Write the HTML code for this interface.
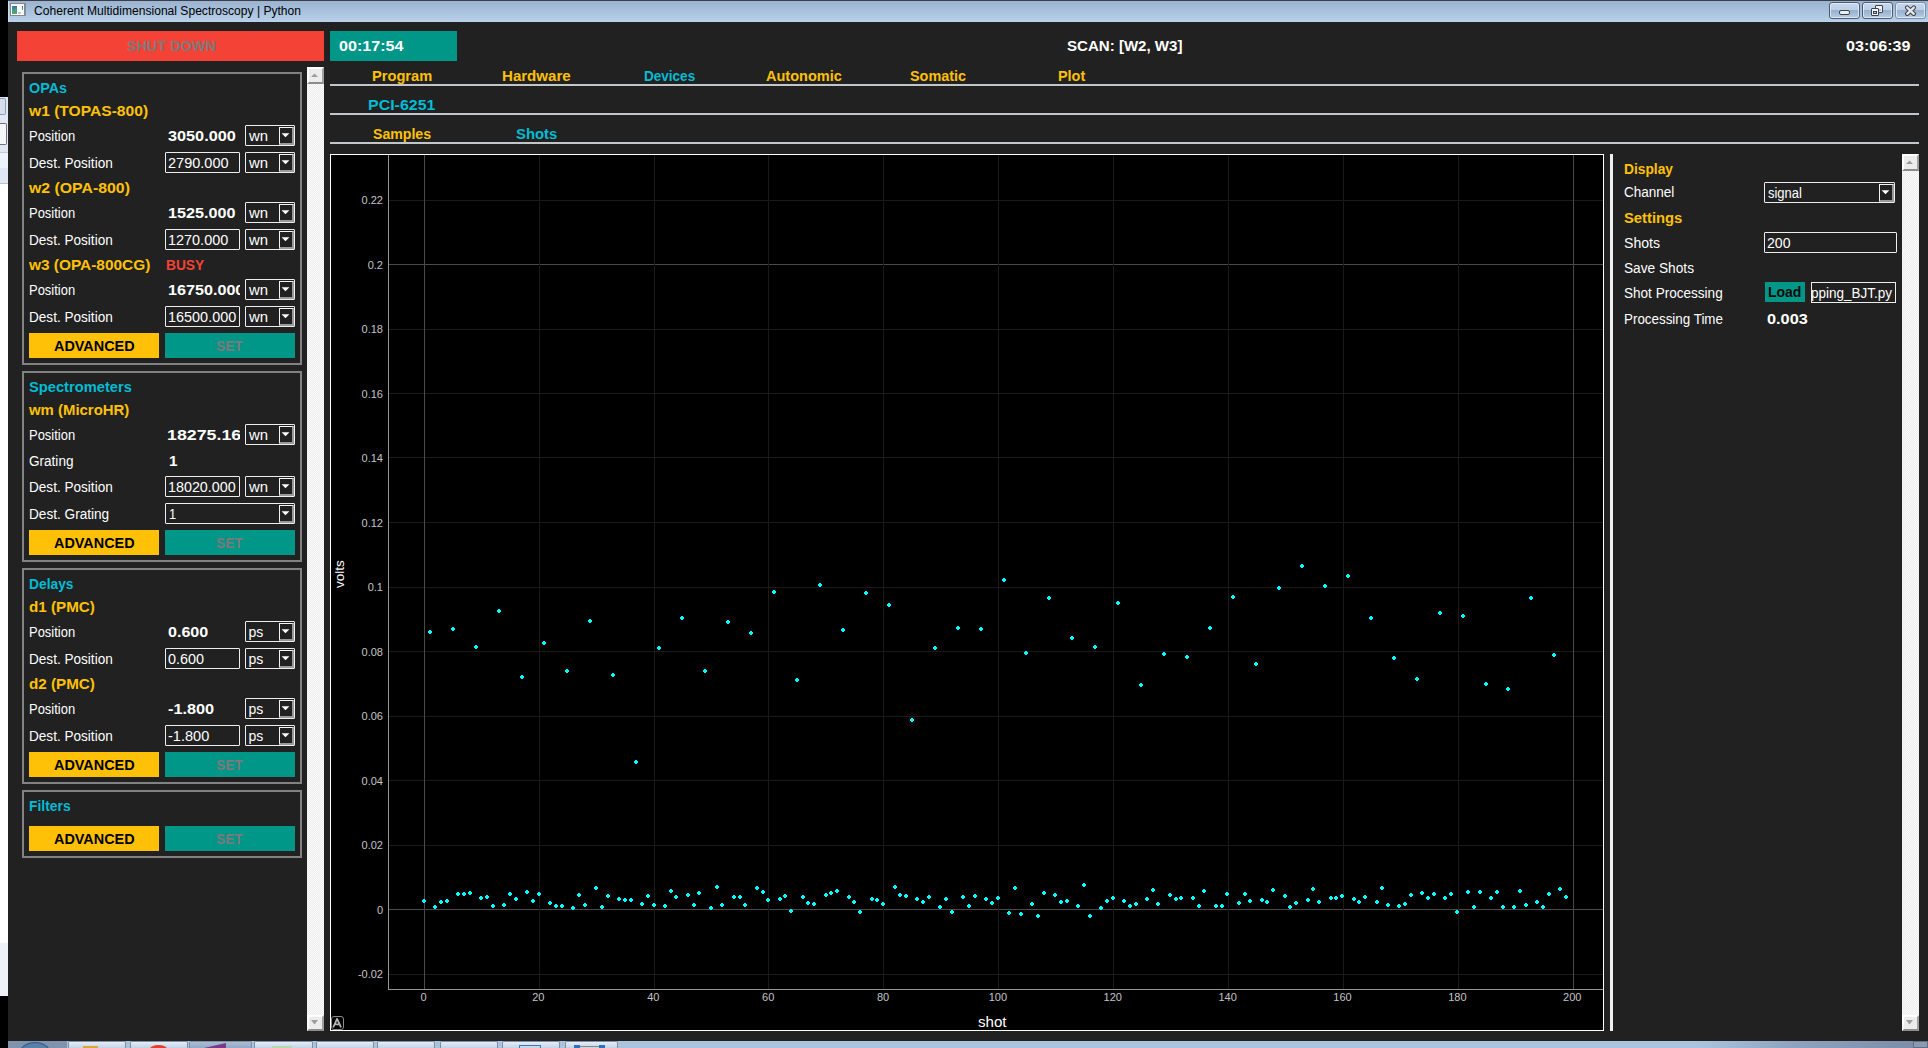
<!DOCTYPE html>
<html><head><meta charset="utf-8"><style>
html,body{margin:0;padding:0;}
body{width:1928px;height:1048px;overflow:hidden;background:#212121;position:relative;font-family:"Liberation Sans", sans-serif;}
.a{position:absolute;}
.t{position:absolute;white-space:pre;transform-origin:0 50%;}
</style></head><body>
<div class="a" style="left:0px;top:0px;width:8px;height:97px;background:#000;"></div>
<div class="a" style="left:0px;top:97px;width:8px;height:56px;background:#dfe8f3;"></div>
<div class="a" style="left:0px;top:98px;width:6px;height:17px;background:#d6dee9;border:1px solid #8a9ab8;box-sizing:border-box;border-left:none;border-radius:0 2px 2px 0;"></div>
<div class="a" style="left:0px;top:123px;width:7px;height:22px;background:#f4f6f9;border:1px solid #6e737a;box-sizing:border-box;border-left:none;border-radius:0 2px 2px 0;"></div>
<div class="a" style="left:0px;top:152px;width:8px;height:1px;background:#c3ccd6;"></div>
<div class="a" style="left:0px;top:153px;width:8px;height:15px;background:#eef4fb;"></div>
<div class="a" style="left:0px;top:168px;width:8px;height:15px;background:#dfe8f4;"></div>
<div class="a" style="left:0px;top:183px;width:8px;height:1px;background:#b4c2d2;"></div>
<div class="a" style="left:0px;top:184px;width:8px;height:759px;background:#ffffff;"></div>
<div class="a" style="left:0px;top:943px;width:8px;height:53px;background:#eef2f8;"></div>
<div class="a" style="left:0px;top:996px;width:8px;height:45px;background:#000;"></div>
<div class="a" style="left:8px;top:0px;width:1920px;height:1px;background:#3a3f47;"></div>
<div class="a" style="left:8px;top:1px;width:1920px;height:21px;background:linear-gradient(#9bb3d0,#a9c2dd 50%,#b9d1ea);"></div>
<div class="a" style="left:8px;top:1px;width:1px;height:21px;background:#c9dcf0;"></div>
<div class="a" style="left:10px;top:3px;width:15px;height:13px;background:#fafafa;border:1px solid #84888c;box-sizing:border-box;box-shadow:1px 0 0 rgba(90,95,100,0.5);"></div>
<div class="a" style="left:12px;top:6px;width:5px;height:8px;background:linear-gradient(#3d6eae,#4a9a8a 50%,#52ac5e);"></div>
<div class="a" style="left:22px;top:6px;width:1px;height:4px;background:linear-gradient(#2e64b0,#4aac50);"></div>
<div class="a" style="left:18px;top:12px;width:3px;height:2px;background:#c8c8c8;"></div>
<div class="a" style="left:1829px;top:2px;width:31px;height:17px;border:1px solid #4e5a6e;border-radius:3px;box-sizing:border-box;background:linear-gradient(#c6d8ec 0,#bcd0e6 45%,#97b1cf 50%,#a6bed8 75%,#b8cde4 100%);box-shadow:inset 0 0 0 1px rgba(235,243,252,0.75)"></div>
<div class="a" style="left:1862px;top:2px;width:31px;height:17px;border:1px solid #4e5a6e;border-radius:3px;box-sizing:border-box;background:linear-gradient(#c6d8ec 0,#bcd0e6 45%,#97b1cf 50%,#a6bed8 75%,#b8cde4 100%);box-shadow:inset 0 0 0 1px rgba(235,243,252,0.75)"></div>
<div class="a" style="left:1895px;top:2px;width:31px;height:17px;border:1px solid #7e8ea6;border-radius:3px;box-sizing:border-box;background:linear-gradient(#c6d8ec 0,#bcd0e6 45%,#97b1cf 50%,#a6bed8 75%,#b8cde4 100%);box-shadow:inset 0 0 0 1px rgba(235,243,252,0.75)"></div>
<div class="a" style="left:1839px;top:10px;width:11px;height:5px;background:#eeeeee;border:1px solid #3c4250;border-radius:2px;box-sizing:border-box"></div>
<div class="a" style="left:1875px;top:5px;width:8px;height:8px;background:#f4f4f4;border:1px solid #3c4250;border-radius:1px;box-sizing:border-box"></div>
<div class="a" style="left:1879px;top:9px;width:2px;height:2px;background:#a8c0dc"></div>
<div class="a" style="left:1871px;top:8px;width:8px;height:8px;background:#f4f4f4;border:1px solid #3c4250;border-radius:1px;box-sizing:border-box"></div>
<div class="a" style="left:1873px;top:11px;width:4px;height:3px;background:#a8c0dc;border:1px solid #3c4250;box-sizing:border-box"></div>
<svg class="a" style="left:1904px;top:5px" width="13" height="11"><path d="M3.2 2.6 L9.8 8.8 M9.8 2.6 L3.2 8.8" stroke="#3c4250" stroke-width="4.4" stroke-linecap="round"/><path d="M3.2 2.6 L9.8 8.8 M9.8 2.6 L3.2 8.8" stroke="#e6e6e6" stroke-width="2.4" stroke-linecap="round"/></svg>
<div class="a" style="left:17px;top:31px;width:307px;height:30px;background:#F44336;"></div>
<div class="a" style="left:330px;top:31px;width:127px;height:30px;background:#009688;"></div>
<div class="a" style="left:330px;top:84px;width:1589px;height:2px;background:#c2c6c9;"></div>
<div class="a" style="left:330px;top:113px;width:1589px;height:2px;background:#c2c6c9;"></div>
<div class="a" style="left:330px;top:142px;width:1589px;height:2px;background:#c2c6c9;"></div>
<div class="a" style="left:22px;top:72px;width:280px;height:293px;border:2px solid #828282;box-sizing:border-box;"></div>
<div class="a" style="left:245px;top:125px;width:50px;height:21px;background:#212121;border:1px solid #eeeeee;box-sizing:border-box;border-radius:1px;"></div>
<div class="a" style="left:279px;top:127px;width:15px;height:18px;background:#212121;border-left:1px solid #f4f4f4;border-top:1px solid #f4f4f4;border-right:2px solid #9a9a9a;border-bottom:2px solid #9a9a9a;box-sizing:border-box;"></div>
<svg class="a" style="left:279px;top:125px" width="15" height="21"><path d="M2.6 8.2 L10.4 8.2 L6.5 12.2 Z" fill="#ffffff"/></svg>
<div class="a" style="left:165px;top:152px;width:75px;height:21px;background:#212121;border:1px solid #eeeeee;box-sizing:border-box;border-radius:1px;"></div>
<div class="a" style="left:245px;top:152px;width:50px;height:21px;background:#212121;border:1px solid #eeeeee;box-sizing:border-box;border-radius:1px;"></div>
<div class="a" style="left:279px;top:154px;width:15px;height:18px;background:#212121;border-left:1px solid #f4f4f4;border-top:1px solid #f4f4f4;border-right:2px solid #9a9a9a;border-bottom:2px solid #9a9a9a;box-sizing:border-box;"></div>
<svg class="a" style="left:279px;top:152px" width="15" height="21"><path d="M2.6 8.2 L10.4 8.2 L6.5 12.2 Z" fill="#ffffff"/></svg>
<div class="a" style="left:245px;top:202px;width:50px;height:21px;background:#212121;border:1px solid #eeeeee;box-sizing:border-box;border-radius:1px;"></div>
<div class="a" style="left:279px;top:204px;width:15px;height:18px;background:#212121;border-left:1px solid #f4f4f4;border-top:1px solid #f4f4f4;border-right:2px solid #9a9a9a;border-bottom:2px solid #9a9a9a;box-sizing:border-box;"></div>
<svg class="a" style="left:279px;top:202px" width="15" height="21"><path d="M2.6 8.2 L10.4 8.2 L6.5 12.2 Z" fill="#ffffff"/></svg>
<div class="a" style="left:165px;top:229px;width:75px;height:21px;background:#212121;border:1px solid #eeeeee;box-sizing:border-box;border-radius:1px;"></div>
<div class="a" style="left:245px;top:229px;width:50px;height:21px;background:#212121;border:1px solid #eeeeee;box-sizing:border-box;border-radius:1px;"></div>
<div class="a" style="left:279px;top:231px;width:15px;height:18px;background:#212121;border-left:1px solid #f4f4f4;border-top:1px solid #f4f4f4;border-right:2px solid #9a9a9a;border-bottom:2px solid #9a9a9a;box-sizing:border-box;"></div>
<svg class="a" style="left:279px;top:229px" width="15" height="21"><path d="M2.6 8.2 L10.4 8.2 L6.5 12.2 Z" fill="#ffffff"/></svg>
<div class="a" style="left:245px;top:279px;width:50px;height:21px;background:#212121;border:1px solid #eeeeee;box-sizing:border-box;border-radius:1px;"></div>
<div class="a" style="left:279px;top:281px;width:15px;height:18px;background:#212121;border-left:1px solid #f4f4f4;border-top:1px solid #f4f4f4;border-right:2px solid #9a9a9a;border-bottom:2px solid #9a9a9a;box-sizing:border-box;"></div>
<svg class="a" style="left:279px;top:279px" width="15" height="21"><path d="M2.6 8.2 L10.4 8.2 L6.5 12.2 Z" fill="#ffffff"/></svg>
<div class="a" style="left:165px;top:306px;width:75px;height:21px;background:#212121;border:1px solid #eeeeee;box-sizing:border-box;border-radius:1px;"></div>
<div class="a" style="left:245px;top:306px;width:50px;height:21px;background:#212121;border:1px solid #eeeeee;box-sizing:border-box;border-radius:1px;"></div>
<div class="a" style="left:279px;top:308px;width:15px;height:18px;background:#212121;border-left:1px solid #f4f4f4;border-top:1px solid #f4f4f4;border-right:2px solid #9a9a9a;border-bottom:2px solid #9a9a9a;box-sizing:border-box;"></div>
<svg class="a" style="left:279px;top:306px" width="15" height="21"><path d="M2.6 8.2 L10.4 8.2 L6.5 12.2 Z" fill="#ffffff"/></svg>
<div class="a" style="left:29px;top:333px;width:130px;height:25px;background:#FFC107;"></div>
<div class="a" style="left:165px;top:333px;width:130px;height:25px;background:#009688;"></div>
<div class="a" style="left:22px;top:371px;width:280px;height:191px;border:2px solid #828282;box-sizing:border-box;"></div>
<div class="a" style="left:245px;top:424px;width:50px;height:21px;background:#212121;border:1px solid #eeeeee;box-sizing:border-box;border-radius:1px;"></div>
<div class="a" style="left:279px;top:426px;width:15px;height:18px;background:#212121;border-left:1px solid #f4f4f4;border-top:1px solid #f4f4f4;border-right:2px solid #9a9a9a;border-bottom:2px solid #9a9a9a;box-sizing:border-box;"></div>
<svg class="a" style="left:279px;top:424px" width="15" height="21"><path d="M2.6 8.2 L10.4 8.2 L6.5 12.2 Z" fill="#ffffff"/></svg>
<div class="a" style="left:165px;top:476px;width:75px;height:21px;background:#212121;border:1px solid #eeeeee;box-sizing:border-box;border-radius:1px;"></div>
<div class="a" style="left:245px;top:476px;width:50px;height:21px;background:#212121;border:1px solid #eeeeee;box-sizing:border-box;border-radius:1px;"></div>
<div class="a" style="left:279px;top:478px;width:15px;height:18px;background:#212121;border-left:1px solid #f4f4f4;border-top:1px solid #f4f4f4;border-right:2px solid #9a9a9a;border-bottom:2px solid #9a9a9a;box-sizing:border-box;"></div>
<svg class="a" style="left:279px;top:476px" width="15" height="21"><path d="M2.6 8.2 L10.4 8.2 L6.5 12.2 Z" fill="#ffffff"/></svg>
<div class="a" style="left:165px;top:503px;width:130px;height:21px;background:#212121;border:1px solid #eeeeee;box-sizing:border-box;border-radius:1px;"></div>
<div class="a" style="left:279px;top:505px;width:15px;height:18px;background:#212121;border-left:1px solid #f4f4f4;border-top:1px solid #f4f4f4;border-right:2px solid #9a9a9a;border-bottom:2px solid #9a9a9a;box-sizing:border-box;"></div>
<svg class="a" style="left:279px;top:503px" width="15" height="21"><path d="M2.6 8.2 L10.4 8.2 L6.5 12.2 Z" fill="#ffffff"/></svg>
<div class="a" style="left:29px;top:530px;width:130px;height:25px;background:#FFC107;"></div>
<div class="a" style="left:165px;top:530px;width:130px;height:25px;background:#009688;"></div>
<div class="a" style="left:22px;top:568px;width:280px;height:216px;border:2px solid #828282;box-sizing:border-box;"></div>
<div class="a" style="left:245px;top:621px;width:50px;height:21px;background:#212121;border:1px solid #eeeeee;box-sizing:border-box;border-radius:1px;"></div>
<div class="a" style="left:279px;top:623px;width:15px;height:18px;background:#212121;border-left:1px solid #f4f4f4;border-top:1px solid #f4f4f4;border-right:2px solid #9a9a9a;border-bottom:2px solid #9a9a9a;box-sizing:border-box;"></div>
<svg class="a" style="left:279px;top:621px" width="15" height="21"><path d="M2.6 8.2 L10.4 8.2 L6.5 12.2 Z" fill="#ffffff"/></svg>
<div class="a" style="left:165px;top:648px;width:75px;height:21px;background:#212121;border:1px solid #eeeeee;box-sizing:border-box;border-radius:1px;"></div>
<div class="a" style="left:245px;top:648px;width:50px;height:21px;background:#212121;border:1px solid #eeeeee;box-sizing:border-box;border-radius:1px;"></div>
<div class="a" style="left:279px;top:650px;width:15px;height:18px;background:#212121;border-left:1px solid #f4f4f4;border-top:1px solid #f4f4f4;border-right:2px solid #9a9a9a;border-bottom:2px solid #9a9a9a;box-sizing:border-box;"></div>
<svg class="a" style="left:279px;top:648px" width="15" height="21"><path d="M2.6 8.2 L10.4 8.2 L6.5 12.2 Z" fill="#ffffff"/></svg>
<div class="a" style="left:245px;top:698px;width:50px;height:21px;background:#212121;border:1px solid #eeeeee;box-sizing:border-box;border-radius:1px;"></div>
<div class="a" style="left:279px;top:700px;width:15px;height:18px;background:#212121;border-left:1px solid #f4f4f4;border-top:1px solid #f4f4f4;border-right:2px solid #9a9a9a;border-bottom:2px solid #9a9a9a;box-sizing:border-box;"></div>
<svg class="a" style="left:279px;top:698px" width="15" height="21"><path d="M2.6 8.2 L10.4 8.2 L6.5 12.2 Z" fill="#ffffff"/></svg>
<div class="a" style="left:165px;top:725px;width:75px;height:21px;background:#212121;border:1px solid #eeeeee;box-sizing:border-box;border-radius:1px;"></div>
<div class="a" style="left:245px;top:725px;width:50px;height:21px;background:#212121;border:1px solid #eeeeee;box-sizing:border-box;border-radius:1px;"></div>
<div class="a" style="left:279px;top:727px;width:15px;height:18px;background:#212121;border-left:1px solid #f4f4f4;border-top:1px solid #f4f4f4;border-right:2px solid #9a9a9a;border-bottom:2px solid #9a9a9a;box-sizing:border-box;"></div>
<svg class="a" style="left:279px;top:725px" width="15" height="21"><path d="M2.6 8.2 L10.4 8.2 L6.5 12.2 Z" fill="#ffffff"/></svg>
<div class="a" style="left:29px;top:752px;width:130px;height:25px;background:#FFC107;"></div>
<div class="a" style="left:165px;top:752px;width:130px;height:25px;background:#009688;"></div>
<div class="a" style="left:22px;top:790px;width:280px;height:68px;border:2px solid #828282;box-sizing:border-box;"></div>
<div class="a" style="left:29px;top:826px;width:130px;height:25px;background:#FFC107;"></div>
<div class="a" style="left:165px;top:826px;width:130px;height:25px;background:#009688;"></div>
<div class="a" style="left:307px;top:67px;width:17px;height:964px;background-color:#fbfbfb;background-image:linear-gradient(45deg,#ececec 25%,transparent 25%,transparent 75%,#ececec 75%),linear-gradient(45deg,#ececec 25%,transparent 25%,transparent 75%,#ececec 75%);background-size:2px 2px;background-position:0 0,1px 1px"></div>
<div class="a" style="left:307px;top:67px;width:17px;height:17px;background:#ececec;border-top:2px solid #fff;border-left:2px solid #fff;border-right:2px solid #a0a0a0;border-bottom:2px solid #8c8c8c;box-sizing:border-box"></div>
<svg class="a" style="left:307px;top:67px" width="17" height="17"><path d="M4 10 L11 10 L7.5 6.5 Z" fill="#9c9c9c"/></svg>
<div class="a" style="left:307px;top:1015px;width:17px;height:16px;background:#ececec;border-top:2px solid #fff;border-left:2px solid #fff;border-right:2px solid #a0a0a0;border-bottom:2px solid #8c8c8c;box-sizing:border-box"></div>
<svg class="a" style="left:307px;top:1015px" width="17" height="16"><path d="M4 5 L11 5 L7.5 9.5 Z" fill="#9c9c9c"/></svg>
<div class="a" style="left:330px;top:154px;width:1274px;height:877px;background:#000;border:1px solid #ffffff;box-sizing:border-box;"></div>
<svg class="a" style="left:0;top:0" width="1928" height="1048" shape-rendering="crispEdges"><line x1="388" y1="974.5" x2="1603" y2="974.5" stroke="#1a1a1a" stroke-width="1"/><line x1="388" y1="909.5" x2="1603" y2="909.5" stroke="#4a4a4a" stroke-width="1"/><line x1="388" y1="845.5" x2="1603" y2="845.5" stroke="#1a1a1a" stroke-width="1"/><line x1="388" y1="780.5" x2="1603" y2="780.5" stroke="#1a1a1a" stroke-width="1"/><line x1="388" y1="716.5" x2="1603" y2="716.5" stroke="#1a1a1a" stroke-width="1"/><line x1="388" y1="651.5" x2="1603" y2="651.5" stroke="#1a1a1a" stroke-width="1"/><line x1="388" y1="587.5" x2="1603" y2="587.5" stroke="#1a1a1a" stroke-width="1"/><line x1="388" y1="522.5" x2="1603" y2="522.5" stroke="#1a1a1a" stroke-width="1"/><line x1="388" y1="457.5" x2="1603" y2="457.5" stroke="#1a1a1a" stroke-width="1"/><line x1="388" y1="393.5" x2="1603" y2="393.5" stroke="#1a1a1a" stroke-width="1"/><line x1="388" y1="329.5" x2="1603" y2="329.5" stroke="#1a1a1a" stroke-width="1"/><line x1="388" y1="264.5" x2="1603" y2="264.5" stroke="#4a4a4a" stroke-width="1"/><line x1="388" y1="200.5" x2="1603" y2="200.5" stroke="#1a1a1a" stroke-width="1"/><line x1="424.5" y1="155" x2="424.5" y2="989" stroke="#4a4a4a" stroke-width="1"/><line x1="539.5" y1="155" x2="539.5" y2="989" stroke="#1a1a1a" stroke-width="1"/><line x1="654.5" y1="155" x2="654.5" y2="989" stroke="#1a1a1a" stroke-width="1"/><line x1="768.5" y1="155" x2="768.5" y2="989" stroke="#1a1a1a" stroke-width="1"/><line x1="883.5" y1="155" x2="883.5" y2="989" stroke="#1a1a1a" stroke-width="1"/><line x1="998.5" y1="155" x2="998.5" y2="989" stroke="#1a1a1a" stroke-width="1"/><line x1="1113.5" y1="155" x2="1113.5" y2="989" stroke="#1a1a1a" stroke-width="1"/><line x1="1228.5" y1="155" x2="1228.5" y2="989" stroke="#1a1a1a" stroke-width="1"/><line x1="1343.5" y1="155" x2="1343.5" y2="989" stroke="#1a1a1a" stroke-width="1"/><line x1="1458.5" y1="155" x2="1458.5" y2="989" stroke="#1a1a1a" stroke-width="1"/><line x1="1573.5" y1="155" x2="1573.5" y2="989" stroke="#4a4a4a" stroke-width="1"/><line x1="388.5" y1="155" x2="388.5" y2="990" stroke="#969696" stroke-width="1"/><line x1="388" y1="989.5" x2="1603" y2="989.5" stroke="#969696" stroke-width="1"/></svg>
<div class="a" style="left:320.3px;top:566.8px;width:40px;height:14px;"><div style="position:absolute;left:0;top:0;width:40px;text-align:center;transform-origin:20px 7px;transform:rotate(-90deg);font-size:13.5px;line-height:14px;color:#fff;white-space:nowrap">volts</div></div>
<div class="a" style="left:331px;top:1016px;width:13px;height:14px;border:1px solid #8a8a8a;border-radius:3px;box-sizing:border-box"></div>
<svg class="a" style="left:331px;top:1016px" width="13" height="14"><path d="M2.2 11.4 L6.1 2.8 L10 11.4 M3.9 8.4 L8.3 8.4" stroke="#b4b4b4" stroke-width="1.8" fill="none" stroke-linejoin="round"/></svg>
<svg class="a" style="left:0;top:0" width="1928" height="1048" shape-rendering="crispEdges"><g fill="#00ffff"><path d="M423 899h2v1h1v2h-1v1h-2v-1h-1v-2h1z"/><path d="M434 905h2v1h1v2h-1v1h-2v-1h-1v-2h1z"/><path d="M440 900h2v1h1v2h-1v1h-2v-1h-1v-2h1z"/><path d="M446 899h2v1h1v2h-1v1h-2v-1h-1v-2h1z"/><path d="M457 892h2v1h1v2h-1v1h-2v-1h-1v-2h1z"/><path d="M463 892h2v1h1v2h-1v1h-2v-1h-1v-2h1z"/><path d="M469 891h2v1h1v2h-1v1h-2v-1h-1v-2h1z"/><path d="M480 896h2v1h1v2h-1v1h-2v-1h-1v-2h1z"/><path d="M486 895h2v1h1v2h-1v1h-2v-1h-1v-2h1z"/><path d="M492 904h2v1h1v2h-1v1h-2v-1h-1v-2h1z"/><path d="M503 903h2v1h1v2h-1v1h-2v-1h-1v-2h1z"/><path d="M509 892h2v1h1v2h-1v1h-2v-1h-1v-2h1z"/><path d="M515 897h2v1h1v2h-1v1h-2v-1h-1v-2h1z"/><path d="M526 890h2v1h1v2h-1v1h-2v-1h-1v-2h1z"/><path d="M532 899h2v1h1v2h-1v1h-2v-1h-1v-2h1z"/><path d="M538 892h2v1h1v2h-1v1h-2v-1h-1v-2h1z"/><path d="M549 901h2v1h1v2h-1v1h-2v-1h-1v-2h1z"/><path d="M555 904h2v1h1v2h-1v1h-2v-1h-1v-2h1z"/><path d="M561 904h2v1h1v2h-1v1h-2v-1h-1v-2h1z"/><path d="M572 906h2v1h1v2h-1v1h-2v-1h-1v-2h1z"/><path d="M578 893h2v1h1v2h-1v1h-2v-1h-1v-2h1z"/><path d="M584 903h2v1h1v2h-1v1h-2v-1h-1v-2h1z"/><path d="M595 886h2v1h1v2h-1v1h-2v-1h-1v-2h1z"/><path d="M601 905h2v1h1v2h-1v1h-2v-1h-1v-2h1z"/><path d="M607 894h2v1h1v2h-1v1h-2v-1h-1v-2h1z"/><path d="M618 897h2v1h1v2h-1v1h-2v-1h-1v-2h1z"/><path d="M624 898h2v1h1v2h-1v1h-2v-1h-1v-2h1z"/><path d="M630 898h2v1h1v2h-1v1h-2v-1h-1v-2h1z"/><path d="M641 902h2v1h1v2h-1v1h-2v-1h-1v-2h1z"/><path d="M647 894h2v1h1v2h-1v1h-2v-1h-1v-2h1z"/><path d="M653 903h2v1h1v2h-1v1h-2v-1h-1v-2h1z"/><path d="M664 904h2v1h1v2h-1v1h-2v-1h-1v-2h1z"/><path d="M670 889h2v1h1v2h-1v1h-2v-1h-1v-2h1z"/><path d="M675 895h2v1h1v2h-1v1h-2v-1h-1v-2h1z"/><path d="M687 893h2v1h1v2h-1v1h-2v-1h-1v-2h1z"/><path d="M693 903h2v1h1v2h-1v1h-2v-1h-1v-2h1z"/><path d="M698 891h2v1h1v2h-1v1h-2v-1h-1v-2h1z"/><path d="M710 906h2v1h1v2h-1v1h-2v-1h-1v-2h1z"/><path d="M716 885h2v1h1v2h-1v1h-2v-1h-1v-2h1z"/><path d="M721 903h2v1h1v2h-1v1h-2v-1h-1v-2h1z"/><path d="M733 895h2v1h1v2h-1v1h-2v-1h-1v-2h1z"/><path d="M739 895h2v1h1v2h-1v1h-2v-1h-1v-2h1z"/><path d="M744 903h2v1h1v2h-1v1h-2v-1h-1v-2h1z"/><path d="M756 886h2v1h1v2h-1v1h-2v-1h-1v-2h1z"/><path d="M762 890h2v1h1v2h-1v1h-2v-1h-1v-2h1z"/><path d="M767 898h2v1h1v2h-1v1h-2v-1h-1v-2h1z"/><path d="M779 897h2v1h1v2h-1v1h-2v-1h-1v-2h1z"/><path d="M784 894h2v1h1v2h-1v1h-2v-1h-1v-2h1z"/><path d="M790 909h2v1h1v2h-1v1h-2v-1h-1v-2h1z"/><path d="M802 895h2v1h1v2h-1v1h-2v-1h-1v-2h1z"/><path d="M807 901h2v1h1v2h-1v1h-2v-1h-1v-2h1z"/><path d="M813 902h2v1h1v2h-1v1h-2v-1h-1v-2h1z"/><path d="M825 893h2v1h1v2h-1v1h-2v-1h-1v-2h1z"/><path d="M830 891h2v1h1v2h-1v1h-2v-1h-1v-2h1z"/><path d="M836 889h2v1h1v2h-1v1h-2v-1h-1v-2h1z"/><path d="M848 895h2v1h1v2h-1v1h-2v-1h-1v-2h1z"/><path d="M853 900h2v1h1v2h-1v1h-2v-1h-1v-2h1z"/><path d="M859 910h2v1h1v2h-1v1h-2v-1h-1v-2h1z"/><path d="M871 897h2v1h1v2h-1v1h-2v-1h-1v-2h1z"/><path d="M876 898h2v1h1v2h-1v1h-2v-1h-1v-2h1z"/><path d="M882 902h2v1h1v2h-1v1h-2v-1h-1v-2h1z"/><path d="M894 885h2v1h1v2h-1v1h-2v-1h-1v-2h1z"/><path d="M899 893h2v1h1v2h-1v1h-2v-1h-1v-2h1z"/><path d="M905 894h2v1h1v2h-1v1h-2v-1h-1v-2h1z"/><path d="M916 897h2v1h1v2h-1v1h-2v-1h-1v-2h1z"/><path d="M922 900h2v1h1v2h-1v1h-2v-1h-1v-2h1z"/><path d="M928 895h2v1h1v2h-1v1h-2v-1h-1v-2h1z"/><path d="M939 905h2v1h1v2h-1v1h-2v-1h-1v-2h1z"/><path d="M945 897h2v1h1v2h-1v1h-2v-1h-1v-2h1z"/><path d="M951 910h2v1h1v2h-1v1h-2v-1h-1v-2h1z"/><path d="M962 895h2v1h1v2h-1v1h-2v-1h-1v-2h1z"/><path d="M968 904h2v1h1v2h-1v1h-2v-1h-1v-2h1z"/><path d="M974 894h2v1h1v2h-1v1h-2v-1h-1v-2h1z"/><path d="M985 897h2v1h1v2h-1v1h-2v-1h-1v-2h1z"/><path d="M991 901h2v1h1v2h-1v1h-2v-1h-1v-2h1z"/><path d="M997 896h2v1h1v2h-1v1h-2v-1h-1v-2h1z"/><path d="M1008 911h2v1h1v2h-1v1h-2v-1h-1v-2h1z"/><path d="M1014 886h2v1h1v2h-1v1h-2v-1h-1v-2h1z"/><path d="M1020 912h2v1h1v2h-1v1h-2v-1h-1v-2h1z"/><path d="M1031 902h2v1h1v2h-1v1h-2v-1h-1v-2h1z"/><path d="M1037 914h2v1h1v2h-1v1h-2v-1h-1v-2h1z"/><path d="M1043 891h2v1h1v2h-1v1h-2v-1h-1v-2h1z"/><path d="M1054 893h2v1h1v2h-1v1h-2v-1h-1v-2h1z"/><path d="M1060 900h2v1h1v2h-1v1h-2v-1h-1v-2h1z"/><path d="M1066 899h2v1h1v2h-1v1h-2v-1h-1v-2h1z"/><path d="M1077 904h2v1h1v2h-1v1h-2v-1h-1v-2h1z"/><path d="M1083 883h2v1h1v2h-1v1h-2v-1h-1v-2h1z"/><path d="M1089 914h2v1h1v2h-1v1h-2v-1h-1v-2h1z"/><path d="M1100 906h2v1h1v2h-1v1h-2v-1h-1v-2h1z"/><path d="M1106 899h2v1h1v2h-1v1h-2v-1h-1v-2h1z"/><path d="M1112 896h2v1h1v2h-1v1h-2v-1h-1v-2h1z"/><path d="M1123 899h2v1h1v2h-1v1h-2v-1h-1v-2h1z"/><path d="M1129 904h2v1h1v2h-1v1h-2v-1h-1v-2h1z"/><path d="M1135 902h2v1h1v2h-1v1h-2v-1h-1v-2h1z"/><path d="M1146 897h2v1h1v2h-1v1h-2v-1h-1v-2h1z"/><path d="M1152 888h2v1h1v2h-1v1h-2v-1h-1v-2h1z"/><path d="M1157 902h2v1h1v2h-1v1h-2v-1h-1v-2h1z"/><path d="M1169 893h2v1h1v2h-1v1h-2v-1h-1v-2h1z"/><path d="M1175 897h2v1h1v2h-1v1h-2v-1h-1v-2h1z"/><path d="M1180 896h2v1h1v2h-1v1h-2v-1h-1v-2h1z"/><path d="M1192 896h2v1h1v2h-1v1h-2v-1h-1v-2h1z"/><path d="M1198 904h2v1h1v2h-1v1h-2v-1h-1v-2h1z"/><path d="M1203 889h2v1h1v2h-1v1h-2v-1h-1v-2h1z"/><path d="M1215 904h2v1h1v2h-1v1h-2v-1h-1v-2h1z"/><path d="M1221 904h2v1h1v2h-1v1h-2v-1h-1v-2h1z"/><path d="M1226 892h2v1h1v2h-1v1h-2v-1h-1v-2h1z"/><path d="M1238 901h2v1h1v2h-1v1h-2v-1h-1v-2h1z"/><path d="M1244 892h2v1h1v2h-1v1h-2v-1h-1v-2h1z"/><path d="M1249 899h2v1h1v2h-1v1h-2v-1h-1v-2h1z"/><path d="M1261 898h2v1h1v2h-1v1h-2v-1h-1v-2h1z"/><path d="M1266 900h2v1h1v2h-1v1h-2v-1h-1v-2h1z"/><path d="M1272 888h2v1h1v2h-1v1h-2v-1h-1v-2h1z"/><path d="M1284 894h2v1h1v2h-1v1h-2v-1h-1v-2h1z"/><path d="M1289 905h2v1h1v2h-1v1h-2v-1h-1v-2h1z"/><path d="M1295 901h2v1h1v2h-1v1h-2v-1h-1v-2h1z"/><path d="M1307 898h2v1h1v2h-1v1h-2v-1h-1v-2h1z"/><path d="M1312 887h2v1h1v2h-1v1h-2v-1h-1v-2h1z"/><path d="M1318 900h2v1h1v2h-1v1h-2v-1h-1v-2h1z"/><path d="M1330 896h2v1h1v2h-1v1h-2v-1h-1v-2h1z"/><path d="M1335 896h2v1h1v2h-1v1h-2v-1h-1v-2h1z"/><path d="M1341 894h2v1h1v2h-1v1h-2v-1h-1v-2h1z"/><path d="M1353 897h2v1h1v2h-1v1h-2v-1h-1v-2h1z"/><path d="M1358 900h2v1h1v2h-1v1h-2v-1h-1v-2h1z"/><path d="M1364 895h2v1h1v2h-1v1h-2v-1h-1v-2h1z"/><path d="M1376 900h2v1h1v2h-1v1h-2v-1h-1v-2h1z"/><path d="M1381 886h2v1h1v2h-1v1h-2v-1h-1v-2h1z"/><path d="M1387 903h2v1h1v2h-1v1h-2v-1h-1v-2h1z"/><path d="M1398 904h2v1h1v2h-1v1h-2v-1h-1v-2h1z"/><path d="M1404 902h2v1h1v2h-1v1h-2v-1h-1v-2h1z"/><path d="M1410 893h2v1h1v2h-1v1h-2v-1h-1v-2h1z"/><path d="M1421 891h2v1h1v2h-1v1h-2v-1h-1v-2h1z"/><path d="M1427 896h2v1h1v2h-1v1h-2v-1h-1v-2h1z"/><path d="M1433 892h2v1h1v2h-1v1h-2v-1h-1v-2h1z"/><path d="M1444 896h2v1h1v2h-1v1h-2v-1h-1v-2h1z"/><path d="M1450 892h2v1h1v2h-1v1h-2v-1h-1v-2h1z"/><path d="M1456 910h2v1h1v2h-1v1h-2v-1h-1v-2h1z"/><path d="M1467 890h2v1h1v2h-1v1h-2v-1h-1v-2h1z"/><path d="M1473 905h2v1h1v2h-1v1h-2v-1h-1v-2h1z"/><path d="M1479 890h2v1h1v2h-1v1h-2v-1h-1v-2h1z"/><path d="M1490 896h2v1h1v2h-1v1h-2v-1h-1v-2h1z"/><path d="M1496 890h2v1h1v2h-1v1h-2v-1h-1v-2h1z"/><path d="M1502 905h2v1h1v2h-1v1h-2v-1h-1v-2h1z"/><path d="M1513 905h2v1h1v2h-1v1h-2v-1h-1v-2h1z"/><path d="M1519 889h2v1h1v2h-1v1h-2v-1h-1v-2h1z"/><path d="M1525 903h2v1h1v2h-1v1h-2v-1h-1v-2h1z"/><path d="M1536 900h2v1h1v2h-1v1h-2v-1h-1v-2h1z"/><path d="M1542 905h2v1h1v2h-1v1h-2v-1h-1v-2h1z"/><path d="M1548 892h2v1h1v2h-1v1h-2v-1h-1v-2h1z"/><path d="M1559 887h2v1h1v2h-1v1h-2v-1h-1v-2h1z"/><path d="M1565 895h2v1h1v2h-1v1h-2v-1h-1v-2h1z"/><path d="M429 630h2v1h1v2h-1v1h-2v-1h-1v-2h1z"/><path d="M452 627h2v1h1v2h-1v1h-2v-1h-1v-2h1z"/><path d="M475 645h2v1h1v2h-1v1h-2v-1h-1v-2h1z"/><path d="M498 609h2v1h1v2h-1v1h-2v-1h-1v-2h1z"/><path d="M521 675h2v1h1v2h-1v1h-2v-1h-1v-2h1z"/><path d="M543 641h2v1h1v2h-1v1h-2v-1h-1v-2h1z"/><path d="M566 669h2v1h1v2h-1v1h-2v-1h-1v-2h1z"/><path d="M589 619h2v1h1v2h-1v1h-2v-1h-1v-2h1z"/><path d="M612 673h2v1h1v2h-1v1h-2v-1h-1v-2h1z"/><path d="M635 760h2v1h1v2h-1v1h-2v-1h-1v-2h1z"/><path d="M658 646h2v1h1v2h-1v1h-2v-1h-1v-2h1z"/><path d="M681 616h2v1h1v2h-1v1h-2v-1h-1v-2h1z"/><path d="M704 669h2v1h1v2h-1v1h-2v-1h-1v-2h1z"/><path d="M727 620h2v1h1v2h-1v1h-2v-1h-1v-2h1z"/><path d="M750 631h2v1h1v2h-1v1h-2v-1h-1v-2h1z"/><path d="M773 590h2v1h1v2h-1v1h-2v-1h-1v-2h1z"/><path d="M796 678h2v1h1v2h-1v1h-2v-1h-1v-2h1z"/><path d="M819 583h2v1h1v2h-1v1h-2v-1h-1v-2h1z"/><path d="M842 628h2v1h1v2h-1v1h-2v-1h-1v-2h1z"/><path d="M865 591h2v1h1v2h-1v1h-2v-1h-1v-2h1z"/><path d="M888 603h2v1h1v2h-1v1h-2v-1h-1v-2h1z"/><path d="M911 718h2v1h1v2h-1v1h-2v-1h-1v-2h1z"/><path d="M934 646h2v1h1v2h-1v1h-2v-1h-1v-2h1z"/><path d="M957 626h2v1h1v2h-1v1h-2v-1h-1v-2h1z"/><path d="M980 627h2v1h1v2h-1v1h-2v-1h-1v-2h1z"/><path d="M1003 578h2v1h1v2h-1v1h-2v-1h-1v-2h1z"/><path d="M1025 651h2v1h1v2h-1v1h-2v-1h-1v-2h1z"/><path d="M1048 596h2v1h1v2h-1v1h-2v-1h-1v-2h1z"/><path d="M1071 636h2v1h1v2h-1v1h-2v-1h-1v-2h1z"/><path d="M1094 645h2v1h1v2h-1v1h-2v-1h-1v-2h1z"/><path d="M1117 601h2v1h1v2h-1v1h-2v-1h-1v-2h1z"/><path d="M1140 683h2v1h1v2h-1v1h-2v-1h-1v-2h1z"/><path d="M1163 652h2v1h1v2h-1v1h-2v-1h-1v-2h1z"/><path d="M1186 655h2v1h1v2h-1v1h-2v-1h-1v-2h1z"/><path d="M1209 626h2v1h1v2h-1v1h-2v-1h-1v-2h1z"/><path d="M1232 595h2v1h1v2h-1v1h-2v-1h-1v-2h1z"/><path d="M1255 662h2v1h1v2h-1v1h-2v-1h-1v-2h1z"/><path d="M1278 586h2v1h1v2h-1v1h-2v-1h-1v-2h1z"/><path d="M1301 564h2v1h1v2h-1v1h-2v-1h-1v-2h1z"/><path d="M1324 584h2v1h1v2h-1v1h-2v-1h-1v-2h1z"/><path d="M1347 574h2v1h1v2h-1v1h-2v-1h-1v-2h1z"/><path d="M1370 616h2v1h1v2h-1v1h-2v-1h-1v-2h1z"/><path d="M1393 656h2v1h1v2h-1v1h-2v-1h-1v-2h1z"/><path d="M1416 677h2v1h1v2h-1v1h-2v-1h-1v-2h1z"/><path d="M1439 611h2v1h1v2h-1v1h-2v-1h-1v-2h1z"/><path d="M1462 614h2v1h1v2h-1v1h-2v-1h-1v-2h1z"/><path d="M1485 682h2v1h1v2h-1v1h-2v-1h-1v-2h1z"/><path d="M1507 687h2v1h1v2h-1v1h-2v-1h-1v-2h1z"/><path d="M1530 596h2v1h1v2h-1v1h-2v-1h-1v-2h1z"/><path d="M1553 653h2v1h1v2h-1v1h-2v-1h-1v-2h1z"/></g></svg>
<div class="a" style="left:1610px;top:154px;width:3px;height:877px;background:#f0f0f0;"></div>
<div class="a" style="left:1764px;top:182px;width:131px;height:21px;background:#212121;border:1px solid #eeeeee;box-sizing:border-box;border-radius:1px;"></div>
<div class="a" style="left:1879px;top:184px;width:15px;height:18px;background:#212121;border-left:1px solid #f4f4f4;border-top:1px solid #f4f4f4;border-right:2px solid #9a9a9a;border-bottom:2px solid #9a9a9a;box-sizing:border-box;"></div>
<svg class="a" style="left:1879px;top:182px" width="15" height="21"><path d="M2.6 8.2 L10.4 8.2 L6.5 12.2 Z" fill="#ffffff"/></svg>
<div class="a" style="left:1764px;top:232px;width:133px;height:21px;background:#212121;border:1px solid #eeeeee;box-sizing:border-box;border-radius:1px;"></div>
<div class="a" style="left:1765px;top:282px;width:40px;height:20px;background:#009688;"></div>
<div class="a" style="left:1811px;top:282px;width:85px;height:21px;background:#212121;border:1px solid #eeeeee;box-sizing:border-box;"></div>
<div class="a" style="left:1902px;top:154px;width:17px;height:877px;background-color:#fbfbfb;background-image:linear-gradient(45deg,#ececec 25%,transparent 25%,transparent 75%,#ececec 75%),linear-gradient(45deg,#ececec 25%,transparent 25%,transparent 75%,#ececec 75%);background-size:2px 2px;background-position:0 0,1px 1px"></div>
<div class="a" style="left:1902px;top:154px;width:17px;height:17px;background:#ececec;border-top:2px solid #fff;border-left:2px solid #fff;border-right:2px solid #a0a0a0;border-bottom:2px solid #8c8c8c;box-sizing:border-box"></div>
<svg class="a" style="left:1902px;top:154px" width="17" height="17"><path d="M4 10 L11 10 L7.5 6.5 Z" fill="#9c9c9c"/></svg>
<div class="a" style="left:1902px;top:1015px;width:17px;height:16px;background:#ececec;border-top:2px solid #fff;border-left:2px solid #fff;border-right:2px solid #a0a0a0;border-bottom:2px solid #8c8c8c;box-sizing:border-box"></div>
<svg class="a" style="left:1902px;top:1015px" width="17" height="16"><path d="M4 5 L11 5 L7.5 9.5 Z" fill="#9c9c9c"/></svg>
<div class="a" style="left:0px;top:1041px;width:1928px;height:7px;background:linear-gradient(90deg,#aac4de 0,#aac4de 1700px,#8ea4c0 1790px,#7c8ea8 1910px);"></div>
<div class="a" style="left:0px;top:1041px;width:8px;height:7px;background:#000;"></div>
<div class="a" style="left:8px;top:1041px;width:59px;height:7px;background:#7f93ad;"></div>
<div class="a" style="left:20px;top:1042px;width:30px;height:20px;border:1px solid #2d5b8e;border-radius:50%;background:#5a7fa8;box-sizing:border-box"></div>
<div class="a" style="left:68px;top:1041px;width:58px;height:7px;border:1px solid #7d8fa5;box-sizing:border-box;background:linear-gradient(#e6eef8,#c3d3e6);border-bottom:none;border-radius:2px 2px 0 0;"></div>
<div class="a" style="left:130px;top:1041px;width:58px;height:7px;border:1px solid #7d8fa5;box-sizing:border-box;background:linear-gradient(#e6eef8,#c3d3e6);border-bottom:none;border-radius:2px 2px 0 0;"></div>
<div class="a" style="left:189px;top:1041px;width:63px;height:7px;border:1px solid #7d8fa5;box-sizing:border-box;background:linear-gradient(#a9bcd4,#93a9c4);border-bottom:none;border-radius:2px 2px 0 0;"></div>
<div class="a" style="left:254px;top:1041px;width:59px;height:7px;border:1px solid #7d8fa5;box-sizing:border-box;background:linear-gradient(#e6eef8,#c3d3e6);border-bottom:none;border-radius:2px 2px 0 0;"></div>
<div class="a" style="left:316px;top:1041px;width:58px;height:7px;border:1px solid #7d8fa5;box-sizing:border-box;background:linear-gradient(#e6eef8,#c3d3e6);border-bottom:none;border-radius:2px 2px 0 0;"></div>
<div class="a" style="left:377px;top:1041px;width:58px;height:7px;border:1px solid #7d8fa5;box-sizing:border-box;background:linear-gradient(#e6eef8,#c3d3e6);border-bottom:none;border-radius:2px 2px 0 0;"></div>
<div class="a" style="left:440px;top:1041px;width:58px;height:7px;border:1px solid #7d8fa5;box-sizing:border-box;background:linear-gradient(#e6eef8,#c3d3e6);border-bottom:none;border-radius:2px 2px 0 0;"></div>
<div class="a" style="left:502px;top:1041px;width:58px;height:7px;border:1px solid #7d8fa5;box-sizing:border-box;background:linear-gradient(#e6eef8,#c3d3e6);border-bottom:none;border-radius:2px 2px 0 0;"></div>
<div class="a" style="left:565px;top:1041px;width:53px;height:7px;border:1px solid #7d8fa5;box-sizing:border-box;background:linear-gradient(#e6eef8,#c3d3e6);border-bottom:none;border-radius:2px 2px 0 0;"></div>
<div class="a" style="left:83px;top:1046px;width:15px;height:2px;background:#d8a640"></div>
<div class="a" style="left:150px;top:1045px;width:17px;height:8px;border-radius:50%;background:#e04030"></div>
<svg class="a" style="left:200px;top:1043px" width="30" height="5"><path d="M4 5 L26 0 L26 5 Z" fill="#7a3a8a"/></svg>
<div class="a" style="left:272px;top:1046px;width:20px;height:2px;background:#b8d8b0"></div>
<div class="a" style="left:519px;top:1045px;width:22px;height:3px;border:1px solid #3a78c0;border-bottom:none;box-sizing:border-box"></div>
<div class="a" style="left:574px;top:1045px;width:6px;height:3px;background:#2f6fc0"></div><div class="a" style="left:599px;top:1045px;width:6px;height:3px;background:#2f6fc0"></div><div class="a" style="left:580px;top:1046px;width:19px;height:1px;background:#888"></div>
<div class="a" style="left:1913px;top:1041px;width:15px;height:7px;background:#8a9ab0;border:1px solid #5e6e84;box-sizing:border-box;"></div>
<div class="t" style="left:33.50px;top:4.84px;font-size:12px;line-height:12px;color:#000;transform:scaleX(1.0066);">Coherent Multidimensional Spectroscopy | Python</div>
<div class="t" style="left:126.50px;top:39.15px;font-size:14px;line-height:14px;color:#7a7a7a;font-weight:700;transform:scaleX(1.0313);">SHUT DOWN</div>
<div class="t" style="left:339.10px;top:39.15px;font-size:14px;line-height:14px;color:#ffffff;font-weight:700;transform:scaleX(1.1499);">00:17:54</div>
<div class="t" style="left:1066.50px;top:39.15px;font-size:14px;line-height:14px;color:#ffffff;font-weight:700;transform:scaleX(1.0759);">SCAN: [W2, W3]</div>
<div class="t" style="left:1845.90px;top:39.15px;font-size:14px;line-height:14px;color:#ffffff;font-weight:700;transform:scaleX(1.1499);">03:06:39</div>
<div class="t" style="left:372.30px;top:69.15px;font-size:14px;line-height:14px;color:#FFC107;font-weight:700;transform:scaleX(1.0463);">Program</div>
<div class="t" style="left:502.20px;top:69.15px;font-size:14px;line-height:14px;color:#FFC107;font-weight:700;transform:scaleX(1.0762);">Hardware</div>
<div class="t" style="left:644.10px;top:69.15px;font-size:14px;line-height:14px;color:#00BCD4;font-weight:700;transform:scaleX(0.9665);">Devices</div>
<div class="t" style="left:765.80px;top:69.15px;font-size:14px;line-height:14px;color:#FFC107;font-weight:700;transform:scaleX(1.0359);">Autonomic</div>
<div class="t" style="left:909.70px;top:69.15px;font-size:14px;line-height:14px;color:#FFC107;font-weight:700;transform:scaleX(1.0286);">Somatic</div>
<div class="t" style="left:1058.30px;top:69.15px;font-size:14px;line-height:14px;color:#FFC107;font-weight:700;transform:scaleX(1.0293);">Plot</div>
<div class="t" style="left:368.00px;top:98.15px;font-size:14px;line-height:14px;color:#00BCD4;font-weight:700;transform:scaleX(1.1400);">PCI-6251</div>
<div class="t" style="left:372.50px;top:126.95px;font-size:14px;line-height:14px;color:#FFC107;font-weight:700;transform:scaleX(1.0072);">Samples</div>
<div class="t" style="left:515.50px;top:126.95px;font-size:14px;line-height:14px;color:#00BCD4;font-weight:700;transform:scaleX(1.0609);">Shots</div>
<div class="t" style="left:28.50px;top:80.75px;font-size:14px;line-height:14px;color:#00BCD4;font-weight:700;transform:scaleX(1.0251);">OPAs</div>
<div class="t" style="left:28.50px;top:104.05px;font-size:14px;line-height:14px;color:#FFC107;font-weight:700;transform:scaleX(1.1147);">w1 (TOPAS-800)</div>
<div class="t" style="left:28.50px;top:128.95px;font-size:14px;line-height:14px;color:#ffffff;transform:scaleX(0.9270);">Position</div>
<div class="a" style="left:165px;top:125.95px;width:75px;height:20px;overflow:hidden"><div class="t" style="left:2.70px;top:3px;font-size:14px;line-height:14px;color:#ffffff;font-weight:700;transform:scaleX(1.1602);">3050.000</div></div>
<div class="t" style="left:248.50px;top:129.15px;font-size:14px;line-height:14px;color:#ffffff;transform:scaleX(1.0647);">wn</div>
<div class="t" style="left:28.50px;top:155.95px;font-size:14px;line-height:14px;color:#ffffff;transform:scaleX(0.9698);">Dest. Position</div>
<div class="a" style="left:166px;top:153.15px;width:73px;height:20px;overflow:hidden"><div class="t" style="left:2.00px;top:3px;font-size:14px;line-height:14px;color:#ffffff;transform:scaleX(1.0365);">2790.000</div></div>
<div class="t" style="left:248.50px;top:156.15px;font-size:14px;line-height:14px;color:#ffffff;transform:scaleX(1.0647);">wn</div>
<div class="t" style="left:28.50px;top:181.05px;font-size:14px;line-height:14px;color:#FFC107;font-weight:700;transform:scaleX(1.1313);">w2 (OPA-800)</div>
<div class="t" style="left:28.50px;top:205.95px;font-size:14px;line-height:14px;color:#ffffff;transform:scaleX(0.9270);">Position</div>
<div class="a" style="left:165px;top:202.95px;width:75px;height:20px;overflow:hidden"><div class="t" style="left:2.70px;top:3px;font-size:14px;line-height:14px;color:#ffffff;font-weight:700;transform:scaleX(1.1549);">1525.000</div></div>
<div class="t" style="left:248.50px;top:206.15px;font-size:14px;line-height:14px;color:#ffffff;transform:scaleX(1.0647);">wn</div>
<div class="t" style="left:28.50px;top:232.95px;font-size:14px;line-height:14px;color:#ffffff;transform:scaleX(0.9698);">Dest. Position</div>
<div class="a" style="left:166px;top:230.15px;width:73px;height:20px;overflow:hidden"><div class="t" style="left:2.00px;top:3px;font-size:14px;line-height:14px;color:#ffffff;transform:scaleX(1.0312);">1270.000</div></div>
<div class="t" style="left:248.50px;top:233.15px;font-size:14px;line-height:14px;color:#ffffff;transform:scaleX(1.0647);">wn</div>
<div class="t" style="left:28.50px;top:258.05px;font-size:14px;line-height:14px;color:#FFC107;font-weight:700;transform:scaleX(1.1005);">w3 (OPA-800CG)</div>
<div class="t" style="left:165.50px;top:258.05px;font-size:14px;line-height:14px;color:#F44336;font-weight:700;transform:scaleX(0.9814);">BUSY</div>
<div class="t" style="left:28.50px;top:282.95px;font-size:14px;line-height:14px;color:#ffffff;transform:scaleX(0.9270);">Position</div>
<div class="a" style="left:165px;top:279.95px;width:75px;height:20px;overflow:hidden"><div class="t" style="left:2.70px;top:3px;font-size:14px;line-height:14px;color:#ffffff;font-weight:700;transform:scaleX(1.1536);">16750.000</div></div>
<div class="t" style="left:248.50px;top:283.15px;font-size:14px;line-height:14px;color:#ffffff;transform:scaleX(1.0647);">wn</div>
<div class="t" style="left:28.50px;top:309.95px;font-size:14px;line-height:14px;color:#ffffff;transform:scaleX(0.9698);">Dest. Position</div>
<div class="a" style="left:166px;top:307.15px;width:73px;height:20px;overflow:hidden"><div class="t" style="left:2.00px;top:3px;font-size:14px;line-height:14px;color:#ffffff;transform:scaleX(1.0309);">16500.000</div></div>
<div class="t" style="left:248.50px;top:310.15px;font-size:14px;line-height:14px;color:#ffffff;transform:scaleX(1.0647);">wn</div>
<div class="t" style="left:54.00px;top:339.15px;font-size:14px;line-height:14px;color:#000;font-weight:700;transform:scaleX(1.0296);">ADVANCED</div>
<div class="t" style="left:215.80px;top:339.15px;font-size:14px;line-height:14px;color:#7a7a7a;font-weight:700;transform:scaleX(0.9834);">SET</div>
<div class="t" style="left:28.50px;top:379.85px;font-size:14px;line-height:14px;color:#00BCD4;font-weight:700;transform:scaleX(1.0490);">Spectrometers</div>
<div class="t" style="left:28.50px;top:402.65px;font-size:14px;line-height:14px;color:#FFC107;font-weight:700;transform:scaleX(1.0652);">wm (MicroHR)</div>
<div class="t" style="left:28.50px;top:428.15px;font-size:14px;line-height:14px;color:#ffffff;transform:scaleX(0.9270);">Position</div>
<div class="a" style="left:165px;top:425.15px;width:75px;height:20px;overflow:hidden"><div class="t" style="left:2.20px;top:3px;font-size:14px;line-height:14px;color:#ffffff;font-weight:700;transform:scaleX(1.2717);">18275.168</div></div>
<div class="t" style="left:248.50px;top:428.15px;font-size:14px;line-height:14px;color:#ffffff;transform:scaleX(1.0647);">wn</div>
<div class="t" style="left:28.50px;top:454.15px;font-size:14px;line-height:14px;color:#ffffff;transform:scaleX(0.9683);">Grating</div>
<div class="t" style="left:169.40px;top:454.15px;font-size:14px;line-height:14px;color:#ffffff;font-weight:700;transform:scaleX(1.0887);">1</div>
<div class="t" style="left:28.50px;top:480.45px;font-size:14px;line-height:14px;color:#ffffff;transform:scaleX(0.9698);">Dest. Position</div>
<div class="a" style="left:166px;top:477.15px;width:73px;height:20px;overflow:hidden"><div class="t" style="left:2.00px;top:3px;font-size:14px;line-height:14px;color:#ffffff;transform:scaleX(1.0232);">18020.000</div></div>
<div class="t" style="left:248.50px;top:480.15px;font-size:14px;line-height:14px;color:#ffffff;transform:scaleX(1.0647);">wn</div>
<div class="t" style="left:28.50px;top:507.15px;font-size:14px;line-height:14px;color:#ffffff;transform:scaleX(0.9720);">Dest. Grating</div>
<div class="t" style="left:168.50px;top:507.15px;font-size:14px;line-height:14px;color:#ffffff;transform:scaleX(0.9172);">1</div>
<div class="t" style="left:54.00px;top:536.15px;font-size:14px;line-height:14px;color:#000;font-weight:700;transform:scaleX(1.0296);">ADVANCED</div>
<div class="t" style="left:215.80px;top:536.15px;font-size:14px;line-height:14px;color:#7a7a7a;font-weight:700;transform:scaleX(0.9834);">SET</div>
<div class="t" style="left:28.70px;top:576.65px;font-size:14px;line-height:14px;color:#00BCD4;font-weight:700;transform:scaleX(0.9851);">Delays</div>
<div class="t" style="left:28.70px;top:600.35px;font-size:14px;line-height:14px;color:#FFC107;font-weight:700;transform:scaleX(1.0859);">d1 (PMC)</div>
<div class="t" style="left:28.50px;top:624.95px;font-size:14px;line-height:14px;color:#ffffff;transform:scaleX(0.9270);">Position</div>
<div class="t" style="left:168.10px;top:624.95px;font-size:14px;line-height:14px;color:#ffffff;font-weight:700;transform:scaleX(1.1484);">0.600</div>
<div class="t" style="left:248.50px;top:625.15px;font-size:14px;line-height:14px;color:#ffffff;">ps</div>
<div class="t" style="left:28.50px;top:651.95px;font-size:14px;line-height:14px;color:#ffffff;transform:scaleX(0.9698);">Dest. Position</div>
<div class="a" style="left:166px;top:649.15px;width:73px;height:20px;overflow:hidden"><div class="t" style="left:2.00px;top:3px;font-size:14px;line-height:14px;color:#ffffff;transform:scaleX(1.0280);">0.600</div></div>
<div class="t" style="left:248.50px;top:652.15px;font-size:14px;line-height:14px;color:#ffffff;">ps</div>
<div class="t" style="left:28.70px;top:677.45px;font-size:14px;line-height:14px;color:#FFC107;font-weight:700;transform:scaleX(1.0859);">d2 (PMC)</div>
<div class="t" style="left:28.50px;top:701.95px;font-size:14px;line-height:14px;color:#ffffff;transform:scaleX(0.9270);">Position</div>
<div class="t" style="left:168.10px;top:701.95px;font-size:14px;line-height:14px;color:#ffffff;font-weight:700;transform:scaleX(1.1627);">-1.800</div>
<div class="t" style="left:248.50px;top:702.15px;font-size:14px;line-height:14px;color:#ffffff;">ps</div>
<div class="t" style="left:28.50px;top:728.95px;font-size:14px;line-height:14px;color:#ffffff;transform:scaleX(0.9698);">Dest. Position</div>
<div class="a" style="left:166px;top:726.15px;width:73px;height:20px;overflow:hidden"><div class="t" style="left:2.00px;top:3px;font-size:14px;line-height:14px;color:#ffffff;transform:scaleX(1.0387);">-1.800</div></div>
<div class="t" style="left:248.50px;top:729.15px;font-size:14px;line-height:14px;color:#ffffff;">ps</div>
<div class="t" style="left:54.00px;top:758.15px;font-size:14px;line-height:14px;color:#000;font-weight:700;transform:scaleX(1.0296);">ADVANCED</div>
<div class="t" style="left:215.80px;top:758.15px;font-size:14px;line-height:14px;color:#7a7a7a;font-weight:700;transform:scaleX(0.9834);">SET</div>
<div class="t" style="left:28.50px;top:798.85px;font-size:14px;line-height:14px;color:#00BCD4;font-weight:700;transform:scaleX(0.9899);">Filters</div>
<div class="t" style="left:54.00px;top:832.15px;font-size:14px;line-height:14px;color:#000;font-weight:700;transform:scaleX(1.0296);">ADVANCED</div>
<div class="t" style="left:215.80px;top:832.15px;font-size:14px;line-height:14px;color:#7a7a7a;font-weight:700;transform:scaleX(0.9834);">SET</div>
<div class="t" style="left:357.92px;top:969.09px;font-size:11px;line-height:11px;color:#c4c4c4;">-0.02</div>
<div class="t" style="left:376.88px;top:904.59px;font-size:11px;line-height:11px;color:#c4c4c4;">0</div>
<div class="t" style="left:361.58px;top:840.09px;font-size:11px;line-height:11px;color:#c4c4c4;">0.02</div>
<div class="t" style="left:361.58px;top:775.59px;font-size:11px;line-height:11px;color:#c4c4c4;">0.04</div>
<div class="t" style="left:361.58px;top:711.09px;font-size:11px;line-height:11px;color:#c4c4c4;">0.06</div>
<div class="t" style="left:361.58px;top:646.59px;font-size:11px;line-height:11px;color:#c4c4c4;">0.08</div>
<div class="t" style="left:367.70px;top:582.09px;font-size:11px;line-height:11px;color:#c4c4c4;">0.1</div>
<div class="t" style="left:361.58px;top:517.59px;font-size:11px;line-height:11px;color:#c4c4c4;">0.12</div>
<div class="t" style="left:361.58px;top:453.09px;font-size:11px;line-height:11px;color:#c4c4c4;">0.14</div>
<div class="t" style="left:361.58px;top:388.59px;font-size:11px;line-height:11px;color:#c4c4c4;">0.16</div>
<div class="t" style="left:361.58px;top:324.09px;font-size:11px;line-height:11px;color:#c4c4c4;">0.18</div>
<div class="t" style="left:367.70px;top:259.59px;font-size:11px;line-height:11px;color:#c4c4c4;">0.2</div>
<div class="t" style="left:361.58px;top:195.09px;font-size:11px;line-height:11px;color:#c4c4c4;">0.22</div>
<div class="t" style="left:420.44px;top:991.69px;font-size:11px;line-height:11px;color:#c4c4c4;">0</div>
<div class="t" style="left:532.26px;top:991.69px;font-size:11px;line-height:11px;color:#c4c4c4;">20</div>
<div class="t" style="left:647.13px;top:991.69px;font-size:11px;line-height:11px;color:#c4c4c4;">40</div>
<div class="t" style="left:762.02px;top:991.69px;font-size:11px;line-height:11px;color:#c4c4c4;">60</div>
<div class="t" style="left:876.89px;top:991.69px;font-size:11px;line-height:11px;color:#c4c4c4;">80</div>
<div class="t" style="left:988.72px;top:991.69px;font-size:11px;line-height:11px;color:#c4c4c4;">100</div>
<div class="t" style="left:1103.60px;top:991.69px;font-size:11px;line-height:11px;color:#c4c4c4;">120</div>
<div class="t" style="left:1218.48px;top:991.69px;font-size:11px;line-height:11px;color:#c4c4c4;">140</div>
<div class="t" style="left:1333.36px;top:991.69px;font-size:11px;line-height:11px;color:#c4c4c4;">160</div>
<div class="t" style="left:1448.24px;top:991.69px;font-size:11px;line-height:11px;color:#c4c4c4;">180</div>
<div class="t" style="left:1563.12px;top:991.69px;font-size:11px;line-height:11px;color:#c4c4c4;">200</div>
<div class="t" style="left:978.31px;top:1015.15px;font-size:14px;line-height:14px;color:#ffffff;transform:scaleX(1.0798);">shot</div>
<div class="t" style="left:1623.50px;top:161.55px;font-size:14px;line-height:14px;color:#FFC107;font-weight:700;transform:scaleX(0.9834);">Display</div>
<div class="t" style="left:1623.50px;top:185.45px;font-size:14px;line-height:14px;color:#ffffff;transform:scaleX(0.9657);">Channel</div>
<div class="t" style="left:1767.50px;top:186.15px;font-size:14px;line-height:14px;color:#ffffff;transform:scaleX(0.9263);">signal</div>
<div class="t" style="left:1623.50px;top:211.15px;font-size:14px;line-height:14px;color:#FFC107;font-weight:700;transform:scaleX(1.0547);">Settings</div>
<div class="t" style="left:1623.50px;top:235.95px;font-size:14px;line-height:14px;color:#ffffff;transform:scaleX(1.0054);">Shots</div>
<div class="a" style="left:1765px;top:233.15px;width:131px;height:20px;overflow:hidden"><div class="t" style="left:2.00px;top:3px;font-size:14px;line-height:14px;color:#ffffff;transform:scaleX(1.0063);">200</div></div>
<div class="t" style="left:1623.50px;top:260.75px;font-size:14px;line-height:14px;color:#ffffff;transform:scaleX(0.9772);">Save Shots</div>
<div class="t" style="left:1623.50px;top:286.15px;font-size:14px;line-height:14px;color:#ffffff;transform:scaleX(0.9678);">Shot Processing</div>
<div class="t" style="left:1767.90px;top:285.15px;font-size:14px;line-height:14px;color:#0a0a0a;font-weight:700;">Load</div>
<div class="a" style="left:1812px;top:283.15px;width:83px;height:20px;overflow:hidden"><div class="t" style="left:-1.10px;top:3px;font-size:14px;line-height:14px;color:#ffffff;transform:scaleX(0.9643);">pping_BJT.py</div></div>
<div class="t" style="left:1623.50px;top:312.35px;font-size:14px;line-height:14px;color:#ffffff;transform:scaleX(0.9562);">Processing Time</div>
<div class="t" style="left:1766.50px;top:312.35px;font-size:14px;line-height:14px;color:#ffffff;font-weight:700;transform:scaleX(1.1631);">0.003</div>
</body></html>
